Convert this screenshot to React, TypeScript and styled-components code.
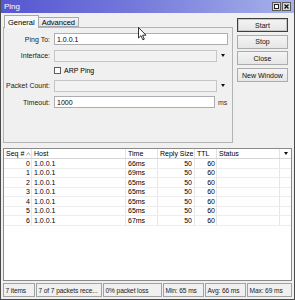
import styled, { createGlobalStyle } from "styled-components";

const GlobalStyle = createGlobalStyle`
  html, body {
    margin: 0;
    padding: 0;
    background: #ffffff;
  }
  body {
    font-family: "Liberation Sans", Arial, sans-serif;
    font-size: 7px;
    color: #000;
  }
  * {
    box-sizing: border-box;
  }
`;

const Window = styled.div`
  position: relative;
  width: 295px;
  height: 300px;
  background: #f0f0f0;
  border: 1px solid #4a4a4a;
  border-top: none;
  display: flex;
  flex-direction: column;
  overflow: hidden;
`;

const TitleBar = styled.div`
  height: 13px;
  margin: 0 -1px;
  padding: 0 4px 0 4px;
  display: flex;
  align-items: center;
  background: linear-gradient(to right, #5656d2 0%, #7478da 45%, #a8b2ea 100%);
  color: #fff;
  font-size: 8px;
`;

const TitleText = styled.span`
  flex: 1;
`;

const TitleButton = styled.div`
  width: 9px;
  height: 9px;
  margin-left: 1px;
  background: #d8d8d8;
  border: 1px solid #5a5a5a;
  display: flex;
  align-items: center;
  justify-content: center;
`;

const Main = styled.div`
  flex: 1;
  display: flex;
  flex-direction: column;
  padding: 0 2px 2px;
  min-height: 0;
`;

const Top = styled.div`
  height: 132px;
  display: flex;
`;

const TabArea = styled.div`
  width: 230px;
  margin-top: 2px;
  display: flex;
  flex-direction: column;
`;

const TabStrip = styled.div`
  height: 12px;
  display: flex;
  align-items: flex-end;
  padding-left: 1px;
  position: relative;
  z-index: 1;
`;

const Tab = styled.div<{ $active?: boolean }>`
  height: ${(p) => (p.$active ? "13px" : "10px")};
  margin-bottom: ${(p) => (p.$active ? "-1px" : "0")};
  padding: 0 3px;
  display: flex;
  align-items: center;
  border: 1px solid #a8a8a8;
  border-bottom: ${(p) => (p.$active ? "none" : "1px solid #a8a8a8")};
  background: ${(p) => (p.$active ? "#f7f7f7" : "linear-gradient(#f2f2f2, #e4e4e4)")};
  font-size: 7.5px;
  & + & {
    border-left: none;
  }
`;

const Panel = styled.div`
  height: 116px;
  border: 1px solid #b4b4b4;
  background: #f0f0f0;
  padding-top: 5px;
  display: flex;
  flex-direction: column;
  gap: 4.5px;
`;

const FieldRow = styled.div`
  display: flex;
  align-items: center;
  height: 12px;
`;

const Label = styled.div`
  width: 46px;
  text-align: right;
  margin-right: 4px;
  color: #222;
  white-space: nowrap;
`;

const Input = styled.div<{ $width: number; $disabled?: boolean }>`
  width: ${(p) => p.$width}px;
  height: 12px;
  padding-left: 2px;
  display: flex;
  align-items: center;
  background: ${(p) => (p.$disabled ? "#f2f2f2" : "#ffffff")};
  border: 1px solid ${(p) => (p.$disabled ? "#c6c6c6" : "#abadb3")};
`;

const DropArrow = styled.div<{ $gap?: number }>`
  width: 0;
  height: 0;
  margin-left: ${(p) => p.$gap ?? 4}px;
  border-left: 2.5px solid transparent;
  border-right: 2.5px solid transparent;
  border-top: 3px solid #111;
`;

const Unit = styled.span`
  margin-left: 3px;
  color: #333;
`;

const CheckRow = styled.div`
  display: flex;
  align-items: center;
  height: 9px;
  padding-left: 50px;
`;

const CheckBox = styled.div`
  width: 7px;
  height: 7px;
  border: 1px solid #5c5c5c;
  background: #fff;
  margin-right: 3px;
`;

const ButtonCol = styled.div`
  width: 51px;
  margin-left: 4px;
  padding-top: 5px;
  display: flex;
  flex-direction: column;
  gap: 2.7px;
`;

const Button = styled.div<{ $default?: boolean }>`
  height: 14px;
  display: flex;
  align-items: center;
  justify-content: center;
  background: linear-gradient(#f4f4f4, #e6e6e6);
  border: 1px solid ${(p) => (p.$default ? "#3f3f3f" : "#acacac")};
  box-shadow: ${(p) => (p.$default ? "inset 0 0 0 1px #c8c8c8" : "none")};
  font-size: 7px;
  color: #111;
`;

const Table = styled.div`
  flex: 1;
  margin-top: 3px;
  background: #fff;
  border: 1px solid #8a8a8a;
  display: flex;
  flex-direction: column;
`;

const columns = "28px 94px 32px 37px 22px 63px 1fr";

const HeaderRow = styled.div`
  display: grid;
  grid-template-columns: ${columns};
  height: 10px;
  border-bottom: 1px solid #d5d5d5;
`;

const HeadCell = styled.div`
  display: flex;
  align-items: center;
  padding-left: 2px;
  border-right: 1px solid #e3e3e3;
  white-space: nowrap;
  overflow: hidden;
  &:last-child {
    border-right: none;
    justify-content: center;
    padding-left: 0;
  }
`;

const DataRow = styled.div`
  display: grid;
  grid-template-columns: ${columns};
  height: 9.5px;
  border-bottom: 1px solid #ececec;
`;

const Cell = styled.div<{ $right?: boolean; $pad?: number }>`
  display: flex;
  align-items: center;
  justify-content: ${(p) => (p.$right ? "flex-end" : "flex-start")};
  padding-left: ${(p) => (p.$right ? 0 : 2)}px;
  padding-right: ${(p) => (p.$right ? p.$pad ?? 2 : 0)}px;
  border-right: 1px solid #e6e6e6;
  white-space: nowrap;
  &:last-child {
    border-right: none;
  }
`;

const StatusBar = styled.div`
  height: 14px;
  margin-top: 2px;
  display: flex;
  gap: 1px;
`;

const StatusCell = styled.div<{ $width?: number }>`
  width: ${(p) => (p.$width ? `${p.$width}px` : "auto")};
  flex: ${(p) => (p.$width ? "none" : "1")};
  display: flex;
  align-items: center;
  padding-left: 1.5px;
  border: 1px solid #a2a2a2;
  white-space: nowrap;
  overflow: hidden;
  font-size: 6.6px;
  letter-spacing: -0.1px;
  color: #222;
`;

const Cursor = styled.svg`
  position: absolute;
  left: 137px;
  top: 27px;
`;

const rows = [
  { seq: 0, time: "66ms" },
  { seq: 1, time: "69ms" },
  { seq: 2, time: "65ms" },
  { seq: 3, time: "65ms" },
  { seq: 4, time: "65ms" },
  { seq: 5, time: "65ms" },
  { seq: 6, time: "67ms" },
];

export default function App() {
  return (
    <>
      <GlobalStyle />
      <Window>
        <TitleBar>
          <TitleText>Ping</TitleText>
          <TitleButton>
            <svg width="5" height="5" viewBox="0 0 5 5">
              <rect x="0.5" y="0.5" width="4" height="4" fill="#fff" stroke="#222" strokeWidth="1" />
            </svg>
          </TitleButton>
          <TitleButton>
            <svg width="5" height="5" viewBox="0 0 5 5">
              <path d="M0.5 0.5 L4.5 4.5 M4.5 0.5 L0.5 4.5" stroke="#111" strokeWidth="1.3" />
            </svg>
          </TitleButton>
        </TitleBar>
        <Main>
          <Top>
            <TabArea>
              <TabStrip>
                <Tab $active>General</Tab>
                <Tab>Advanced</Tab>
              </TabStrip>
              <Panel>
                <FieldRow>
                  <Label>Ping To:</Label>
                  <Input $width={174}>1.0.0.1</Input>
                </FieldRow>
                <FieldRow>
                  <Label>Interface:</Label>
                  <Input $width={163} $disabled />
                  <DropArrow />
                </FieldRow>
                <CheckRow>
                  <CheckBox />
                  <span>ARP Ping</span>
                </CheckRow>
                <FieldRow>
                  <Label>Packet Count:</Label>
                  <Input $width={163} $disabled />
                  <DropArrow />
                </FieldRow>
                <FieldRow>
                  <Label>Timeout:</Label>
                  <Input $width={161}>1000</Input>
                  <Unit>ms</Unit>
                </FieldRow>
              </Panel>
            </TabArea>
            <ButtonCol>
              <Button $default>Start</Button>
              <Button>Stop</Button>
              <Button>Close</Button>
              <Button>New Window</Button>
            </ButtonCol>
          </Top>
          <Table>
            <HeaderRow>
              <HeadCell>
                Seq #
                <svg width="5" height="4" viewBox="0 0 5 4" style={{ marginLeft: 2 }}>
                  <path d="M0.5 3.5 L2.5 0.5 L4.5 3.5" fill="none" stroke="#888" strokeWidth="0.8" />
                </svg>
              </HeadCell>
              <HeadCell>Host</HeadCell>
              <HeadCell>Time</HeadCell>
              <HeadCell>Reply Size</HeadCell>
              <HeadCell>TTL</HeadCell>
              <HeadCell>Status</HeadCell>
              <HeadCell>
                <DropArrow $gap={0} />
              </HeadCell>
            </HeaderRow>
            {rows.map((r) => (
              <DataRow key={r.seq}>
                <Cell $right $pad={1}>{r.seq}</Cell>
                <Cell>1.0.0.1</Cell>
                <Cell>{r.time}</Cell>
                <Cell $right>50</Cell>
                <Cell $right $pad={1}>60</Cell>
                <Cell />
                <Cell />
              </DataRow>
            ))}
          </Table>
          <StatusBar>
            <StatusCell $width={32}>7 items</StatusCell>
            <StatusCell $width={66}>7 of 7 packets rece...</StatusCell>
            <StatusCell $width={59}>0% packet loss</StatusCell>
            <StatusCell $width={41}>Min: 65 ms</StatusCell>
            <StatusCell $width={41}>Avg: 66 ms</StatusCell>
            <StatusCell>Max: 69 ms</StatusCell>
          </StatusBar>
        </Main>
        <Cursor width="9" height="14" viewBox="0 0 9 14">
          <path
            d="M0.5 0.5 L0.5 11 L3 8.6 L4.8 12.8 L6.3 12.2 L4.6 8.2 L8 8.2 Z"
            fill="#fff"
            stroke="#000"
            strokeWidth="0.8"
            strokeLinejoin="round"
          />
        </Cursor>
      </Window>
    </>
  );
}
